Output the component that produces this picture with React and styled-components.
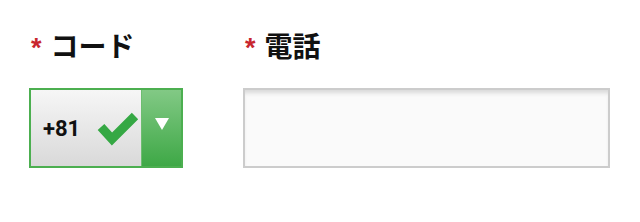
import React from 'react';
import styled, { createGlobalStyle } from 'styled-components';

const GlobalStyle = createGlobalStyle`
  html, body {
    margin: 0;
    padding: 0;
    background: #fff;
  }
  body {
    font-family: "Noto Sans CJK JP", "Noto Sans", sans-serif;
  }
`;

export default function App() {
  return (
    <>
      <GlobalStyle />
      <Form>
        <Field $width="154px">
          <Label>
            <Required>*</Required>コード
          </Label>
          <Select>
            <SelectValue>
              <Code>+81</Code>
              <Check width="42" height="36" viewBox="0 0 42 36">
                <path d="M4 17 L15 29 L38 6" fill="none" stroke="#35a844" strokeWidth="9" strokeLinecap="butt" />
              </Check>
            </SelectValue>
            <Arrow>
              <svg width="14" height="12" viewBox="0 0 14 12">
                <polygon points="0,0 14,0 7,12" fill="#fff" />
              </svg>
            </Arrow>
          </Select>
        </Field>
        <Field $width="367px">
          <Label>
            <Required>*</Required>電話
          </Label>
          <Input type="tel" />
        </Field>
      </Form>
    </>
  );
}

const Form = styled.div`
  display: flex;
  gap: 60px;
  padding: 26px 0 0 29px;
`;

const Field = styled.div`
  display: flex;
  flex-direction: column;
  width: ${(p) => p.$width};
`;

const Label = styled.div`
  display: flex;
  align-items: center;
  gap: 9px;
  height: 38px;
  margin-bottom: 24px;
  padding-left: 2px;
  font-size: 28px;
  font-weight: 700;
  color: #111;
`;

const Required = styled.span`
  color: #c8262e;
  font-family: "Liberation Sans", sans-serif;
  font-size: 27px;
  font-weight: 700;
  position: relative;
  top: 3px;
`;

const Select = styled.div`
  display: flex;
  height: 80px;
  box-sizing: border-box;
  border: 2px solid #4caf50;
  cursor: pointer;
`;

const SelectValue = styled.div`
  flex: 1;
  display: flex;
  align-items: center;
  padding-left: 12px;
  gap: 17px;
  background: linear-gradient(#f6f6f6, #d9d9d9);
`;

const Code = styled.span`
  font-family: Roboto, "Liberation Sans", sans-serif;
  font-size: 22px;
  font-weight: 700;
  color: #111;
`;

const Check = styled.svg`
  margin-top: 0;
`;

const Arrow = styled.div`
  width: 40px;
  display: flex;
  justify-content: center;
  padding-top: 28px;
  box-sizing: border-box;
  border-left: 1px solid #6dbd70;
  background: linear-gradient(#82c985, #3ea846);
`;

const Input = styled.input`
  height: 80px;
  box-sizing: border-box;
  border: 2px solid #cccccc;
  background: #fafafa;
  box-shadow: inset 0 5px 4px -2px #d9d9d9;
  outline: none;
  padding: 0 10px;
  font-size: 20px;
`;
